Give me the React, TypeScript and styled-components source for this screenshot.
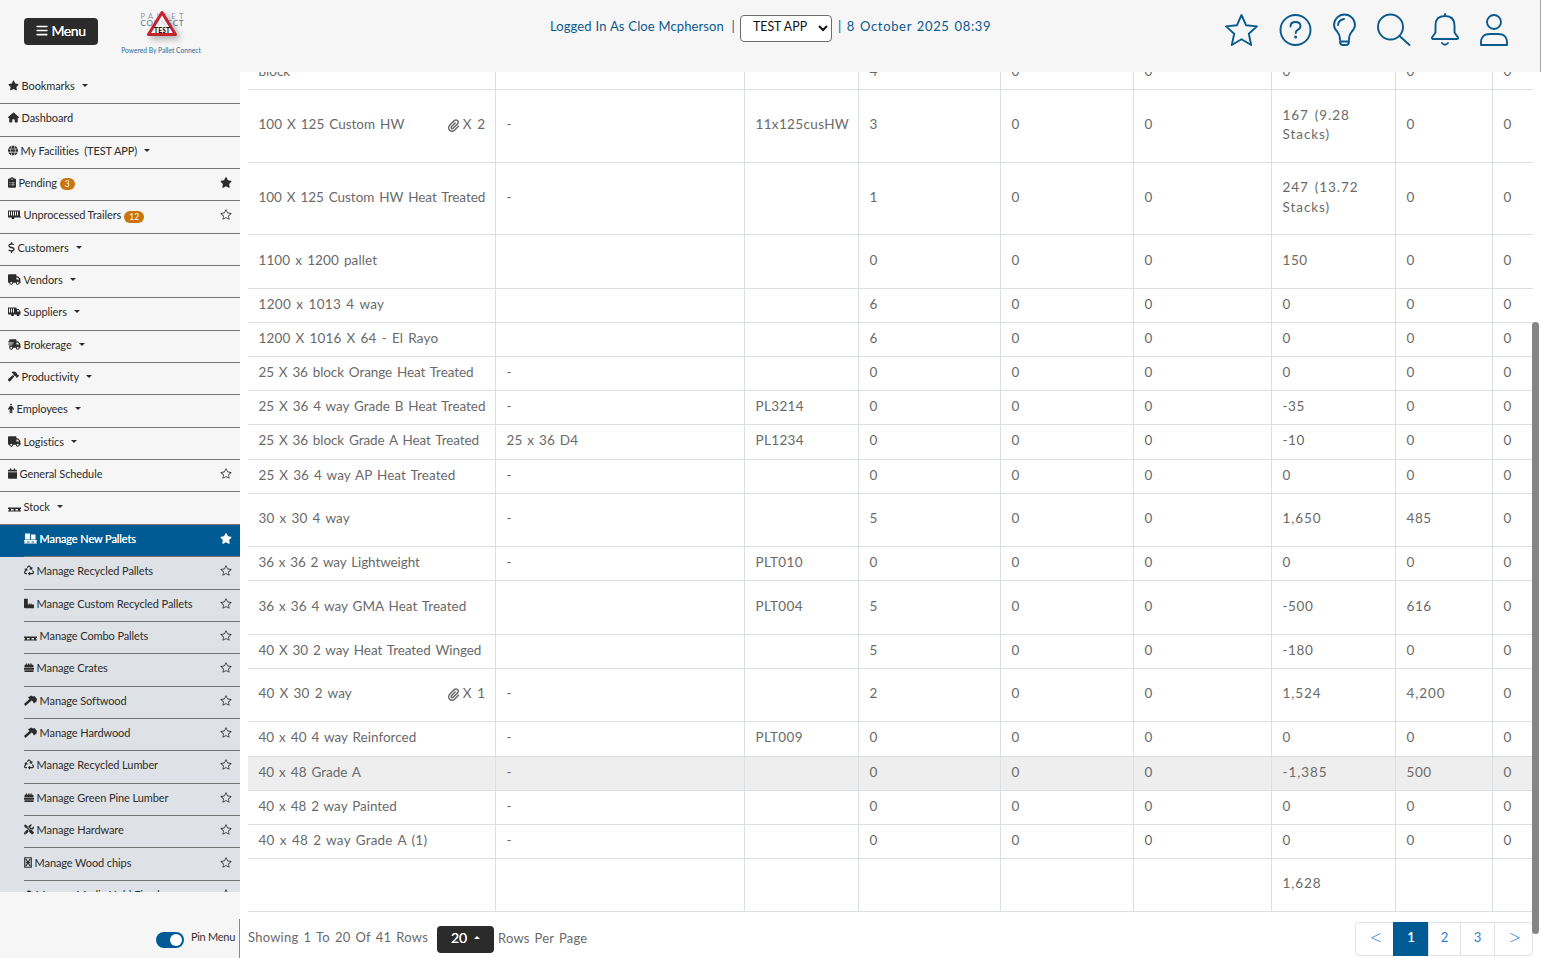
import React from 'react';
import styled, { createGlobalStyle, css } from 'styled-components';
import {
  FaStar, FaHouse, FaGlobe, FaClipboardList, FaDollarSign, FaTruck, FaHammer, FaPerson,
  FaCalendar, FaRecycle, FaScrewdriverWrench, FaPaperclip, FaBars, FaTruckFast,
} from 'react-icons/fa6';
import { BsStar } from 'react-icons/bs';

const GlobalStyle = createGlobalStyle`
  * { box-sizing: border-box; }
  html, body { margin: 0; padding: 0; height: 100%; overflow: hidden; }
  body { font-family: Lato, "Liberation Sans", sans-serif; background: #fff; color: #6a6a6a; }
`;

const Page = styled.div`
  width: 1541px;
  height: 958px;
  display: flex;
  flex-direction: column;
  overflow: hidden;
`;

const Header = styled.header`
  height: 72px;
  flex: none;
  display: flex;
  align-items: flex-start;
  background: #f6f6f6;
  border-right: 1px solid #a5a5a5;
`;

const MenuButton = styled.button`
  width: 74px;
  height: 27px;
  margin: 18px 0 0 24px;
  padding: 0 0 2px;
  border: 0;
  border-radius: 4px;
  background: #2b2b2b;
  color: #fff;
  font: 14px/25px Lato, sans-serif;
  letter-spacing: -0.4px;
  text-shadow: 0 0 0.6px #fff;
  display: flex;
  align-items: center;
  justify-content: center;
  gap: 3px;
  svg { width: 12px; height: 13px; }
`;

const Brand = styled.div`
  width: 100px;
  margin: 8px 0 0 13px;
  display: flex;
  flex-direction: column;
  align-items: center;
  color: #2f6a9b;
  font-size: 6.7px;
  line-height: 8px;
  white-space: nowrap;
  svg { display: block; }
`;

const Session = styled.div`
  flex: 1;
  display: flex;
  align-items: center;
  height: 27px;
  margin: 14px 0 0 339px;
  color: #0b5a8e;
  font-size: 13px;
  line-height: 20px;
  white-space: pre;
`;

const SessionText = styled.span<{ $ls: number; $ws: number }>`
  letter-spacing: ${(p) => p.$ls}px;
  word-spacing: ${(p) => p.$ws}px;
  margin-top: -3px;
`;

const SiteSelect = styled.div`
  width: 92px;
  height: 27px;
  margin: 1px 6px 0 5px;
  padding: 0 3px 2px 12px;
  border: 1px solid #6d6d6d;
  border-radius: 4px;
  background: #fff;
  color: #111;
  font-size: 12.4px;
  display: flex;
  align-items: center;
  justify-content: space-between;
  svg { margin-top: 3px; }
`;

const Tools = styled.div`
  display: flex;
  padding: 12px 31px 0 0;
  svg { display: block; }
`;

const Body = styled.div`
  flex: 1;
  min-height: 0;
  display: flex;
  overflow: hidden;
`;

const Sidebar = styled.aside`
  width: 240px;
  flex: none;
  display: flex;
  flex-direction: column;
  background: #f6f6f6;
`;

const NavList = styled.nav`
  height: 820px;
  overflow: hidden;
`;

const NavTop = styled.div`
  margin-top: -0.21px;
`;

const NavItem = styled.div<{ $sub?: boolean; $active?: boolean }>`
  height: 32.36px;
  padding-left: ${(p) => (p.$sub ? 24 : 0)}px;
  background: ${(p) => (p.$active ? '#005a93' : p.$sub ? '#dee2e6' : 'transparent')};
  color: ${(p) => (p.$active ? '#fff' : '#2c2c2c')};
  ${(p) => p.$active && css`text-shadow: 0 0 0.5px #fff;`}
`;

const NavInner = styled.div<{ $sub?: boolean }>`
  height: 100%;
  display: flex;
  align-items: center;
  border-bottom: 1px solid #757575;
  padding: 0 8px 4.2px ${(p) => (p.$sub ? 0 : 8)}px;
  font-size: 11px;
  white-space: pre;
`;

const NavLabel = styled.span`
  margin-left: 2.6px;
  letter-spacing: -0.1px;
`;

const Caret = styled.i<{ $up?: boolean }>`
  margin-left: 7px;
  border: 3px solid transparent;
  ${(p) => (p.$up ? 'border-bottom-color: currentColor; border-top: 0;' : 'border-top-color: currentColor; border-bottom: 0;')}
`;

const Badge = styled.span`
  margin: 4px 0 0 3px;
  height: 12px;
  padding: 0 5px;
  border-radius: 6px;
  background: #c9740c;
  color: #fff;
  font-size: 8.5px;
  line-height: 12px;
`;

const Bookmark = styled.span`
  margin-left: auto;
  display: flex;
  svg { width: 12px; height: 11px; }
`;

const PinBar = styled.div`
  flex: 1;
  margin-top: 27px;
  border-right: 1px solid #8a8a8a;
  display: flex;
  align-items: flex-start;
  justify-content: flex-end;
  padding: 11px 4px 0 0;
  color: #333;
  font-size: 11px;
  line-height: 14px;
  letter-spacing: -0.28px;
`;

const Toggle = styled.span`
  width: 28px;
  height: 16px;
  margin: 2px 7px 0 0;
  padding: 2px;
  border-radius: 8px;
  background: #005a93;
  display: flex;
  justify-content: flex-end;
`;

const Knob = styled.span`
  width: 12px;
  height: 12px;
  border-radius: 50%;
  background: #fff;
`;

const Main = styled.main`
  flex: 1;
  min-width: 0;
  padding-left: 8px;
  display: flex;
`;

const Content = styled.div`
  width: 1285px;
  flex: none;
  display: flex;
  flex-direction: column;
`;

const ScrollTrack = styled.div`
  width: 8px;
  padding-top: 250px;
`;

const ScrollThumb = styled.div`
  width: 7px;
  height: 612px;
  margin-left: -1px;
  border-radius: 4px;
  background: #858585;
`;

const Row = styled.div<{ $h: number; $hover?: boolean }>`
  height: ${(p) => p.$h}px;
  flex: none;
  display: grid;
  grid-template-rows: 100%;
  grid-template-columns: 248px 249px 114px 142px 133px 138px 124px 97px 40px;
  border-bottom: 1px solid #dcdfe2;
  background: ${(p) => (p.$hover ? '#eeeeee' : '#fff')};
`;

const Cell = styled.div`
  display: flex;
  align-items: center;
  justify-content: space-between;
  padding: 0 9.5px 0 10.5px;
  border-right: 1px solid #dcdfe2;
  font-size: 13.5px;
  line-height: 19.5px;
  &:last-child { border-right: 0; }
`;

const CellText = styled.span<{ $ls?: number }>`
  letter-spacing: ${(p) => p.$ls ?? 0.4}px;
  word-spacing: 1.5px;
  white-space: pre;
  padding-bottom: 1.6px;
`;

const Attachment = styled(CellText)`
  display: flex;
  align-items: center;
  gap: 3px;
  svg { width: 13px; height: 13px; }
`;

const Footer = styled.footer`
  flex: 1;
  display: flex;
  align-items: flex-start;
  padding-top: 10px;
  font-size: 13px;
`;

const FootText = styled.span<{ $ls: number; $lh: number }>`
  line-height: ${(p) => p.$lh}px;
  letter-spacing: ${(p) => p.$ls}px;
  word-spacing: 1.5px;
  white-space: pre;
`;

const SizeButton = styled.button`
  width: 57px;
  height: 27px;
  margin: 4px 4px 0 9px;
  padding: 0 0 5px 0;
  border: 0;
  border-radius: 4px;
  background: #2b2b2b;
  color: #fff;
  font: 14px Lato, sans-serif;
  text-shadow: 0 0 0.6px #fff;
  display: flex;
  align-items: center;
  justify-content: center;
`;

const Pager = styled.div`
  margin-left: auto;
  height: 34px;
  display: flex;
  border: 1px solid #dee2e6;
  border-radius: 4px;
`;

const PageLink = styled.span<{ $w: number; $on?: boolean }>`
  width: ${(p) => p.$w}px;
  display: flex;
  align-items: center;
  justify-content: center;
  padding-bottom: 4px;
  color: ${(p) => (p.$on ? '#fff' : '#2f82d0')};
  border-left: 1px solid ${(p) => (p.$on ? '#005a93' : '#dee2e6')};
  &:first-child { border-left: 0; }
  ${(p) => p.$on && css`background: #005a93; margin: -1px 0; text-shadow: 0 0 0.6px #fff;`}
`;

const PageStep = styled(PageLink)`
  font-family: "Open Sans", sans-serif;
  font-size: 20px;
  font-weight: 300;
  line-height: 20px;
  padding: 0 0 3px 3px;
`;

const Logo = () => (
  <svg width="60" height="38" viewBox="0 0 60 38">
    <defs>
      <filter id="shade" x="-40%" y="-40%" width="200%" height="200%">
        <feDropShadow dx="3" dy="3" stdDeviation="3" floodColor="#000" floodOpacity="0.35" />
      </filter>
    </defs>
    <text x="9.500" y="10.500" fontSize="7.500" fill="#8d98a3" textLength="43" fontFamily="Lato">PALLET</text>
    <text x="9.500" y="18" fontSize="8" fill="#4f7391" textLength="43" fontFamily="Lato">CONNECT</text>
    <path d="M31 4.500 44.500 26.500H17.500Z" fill="#fff" fillOpacity=".75" stroke="#c4202f" strokeWidth="3" strokeLinejoin="round" filter="url(#shade)" />
    <text x="23" y="25" fontSize="6.500" fontWeight="900" fill="#111" textLength="16" fontFamily="Lato">TEST</text>
  </svg>
);

const Wagon = ({ cab }: { cab?: boolean }) => (
  <svg width="13" height="10" viewBox="0 0 26 20" fill="currentColor">
    <path fillRule="evenodd" d={cab
      ? 'M0 2h17v3h4l4 5v6h-2a3 3 0 0 1-6 0h-5a3 3 0 0 1-6 0H1Q0 16 0 14ZM2 4v8h2V4ZM6 4v8h2V4ZM10 4v8h2V4ZM18 7v3h5l-2-3Z'
      : 'M0 2h24v12h2v2H13a3 3 0 0 1-6 0H0ZM2 4v8h2V4ZM6 4v8h2V4ZM10 4v8h2V4ZM14 4v8h2V4ZM18 4v8h2V4Z'} />
    <circle cx={cab ? 9 : 10} cy="17" r="2.200" />
    {cab && <circle cx="20" cy="17" r="2.200" />}
  </svg>
);
const Pallet = () => (
  <svg width="13" height="10" viewBox="0 0 26 20" fill="currentColor">
    <path d="M0 12h26v3h-2v3h2v2H0v-2h2v-3H0Zm6 3v3h5v-3Zm9 0v3h5v-3Z" fillRule="evenodd" />
  </svg>
);
const PalletLoad = () => (
  <svg width="13" height="11" viewBox="0 0 26 22" fill="currentColor">
    <path d="M2 1h10v12H2ZM14 3h9v10h-9ZM0 14h26v3h-2v2h2v2H0v-2h2v-2H0Zm6 3v2h5v-2Zm9 0v2h5v-2Z" fillRule="evenodd" />
  </svg>
);
const Ruler = () => (
  <svg width="10" height="11" viewBox="0 0 21 22" fill="currentColor">
    <path d="M0 1h8v12h2v-2h2v2h2v-2h2v2h5v8H2q-2 0-2-2Z" />
  </svg>
);
const Crate = () => (
  <svg width="10" height="11" viewBox="0 0 22 22" fill="currentColor">
    <path d="M4 2h3v3h2V2h3v3h2V2h3v3h2q2 0 2 2v4H1V7q0-2 2-2h1ZM0 12h22v4H0ZM1 17h20v4H1Z" />
  </svg>
);
const Axe = () => (
  <svg width="13" height="11" viewBox="0 0 26 22" fill="currentColor">
    <path d="M0 18 11 8 8 5l6-4 4 2 3-1 5 6-1 5-5 4-3-5-2-1L3 22Z" />
  </svg>
);
const Hourglass = () => (
  <svg width="8" height="11" viewBox="0 0 16 22" fill="none" stroke="currentColor" strokeWidth="2.400">
    <path d="M1.500 1.500h13v19h-13ZM4 4l8 14M12 4 4 18M4 11h8" />
  </svg>
);

const NavGlyph = styled.span<{ $w: number }>`
  width: ${(p) => p.$w}px;
  flex: none;
  display: flex;
  svg { width: 100%; height: 11px; }
`;

type Nav = { icon: React.ReactNode; w: number; label: string; caret?: boolean; badge?: string; star?: 'on' | 'off'; sub?: boolean; active?: boolean };
const NAV: Nav[] = [
  { icon: <FaStar />, w: 11, label: 'Bookmarks', caret: true },
  { icon: <FaHouse />, w: 11, label: 'Dashboard' },
  { icon: <FaGlobe />, w: 10, label: 'My Facilities  (TEST APP)', caret: true },
  { icon: <FaClipboardList />, w: 8, label: 'Pending', badge: '3', star: 'on' },
  { icon: <Wagon />, w: 13, label: 'Unprocessed Trailers', badge: '12', star: 'off' },
  { icon: <FaDollarSign />, w: 7, label: 'Customers', caret: true },
  { icon: <FaTruck />, w: 13, label: 'Vendors', caret: true },
  { icon: <Wagon cab />, w: 13, label: 'Suppliers', caret: true },
  { icon: <FaTruckFast />, w: 13, label: 'Brokerage', caret: true },
  { icon: <FaHammer />, w: 11, label: 'Productivity', caret: true },
  { icon: <FaPerson />, w: 6, label: 'Employees', caret: true },
  { icon: <FaTruck />, w: 13, label: 'Logistics', caret: true },
  { icon: <FaCalendar />, w: 9, label: 'General Schedule', star: 'off' },
  { icon: <Pallet />, w: 13, label: 'Stock', caret: true },
  { icon: <PalletLoad />, w: 13, label: 'Manage New Pallets', star: 'on', sub: true, active: true },
  { icon: <FaRecycle />, w: 10, label: 'Manage Recycled Pallets', star: 'off', sub: true },
  { icon: <Ruler />, w: 10, label: 'Manage Custom Recycled Pallets', star: 'off', sub: true },
  { icon: <Pallet />, w: 13, label: 'Manage Combo Pallets', star: 'off', sub: true },
  { icon: <Crate />, w: 10, label: 'Manage Crates', star: 'off', sub: true },
  { icon: <Axe />, w: 13, label: 'Manage Softwood', star: 'off', sub: true },
  { icon: <Axe />, w: 13, label: 'Manage Hardwood', star: 'off', sub: true },
  { icon: <FaRecycle />, w: 10, label: 'Manage Recycled Lumber', star: 'off', sub: true },
  { icon: <Crate />, w: 10, label: 'Manage Green Pine Lumber', star: 'off', sub: true },
  { icon: <FaScrewdriverWrench />, w: 10, label: 'Manage Hardware', star: 'off', sub: true },
  { icon: <Hourglass />, w: 8, label: 'Manage Wood chips', star: 'off', sub: true },
  { icon: <FaHammer />, w: 9, label: 'Manage Media Hold Fixed', star: 'off', sub: true },
];

type Item = { h: number; name: string; ls?: number; clips?: number; cells: string[]; hover?: boolean };
const ROWS: Item[] = [
  { h: 73, name: '100 X 125 Custom HW', ls: 0.01, clips: 2, cells: ['-', '11x125cusHW', '3', '0', '0', '167 (9.28\nStacks)', '0', '0'] },
  { h: 72, name: '100 X 125 Custom HW Heat Treated', ls: -0.04, cells: ['-', '', '1', '0', '0', '247 (13.72\nStacks)', '0', '0'] },
  { h: 54, name: '1100 x 1200 pallet', ls: 0.1, cells: ['', '', '0', '0', '0', '150', '0', '0'] },
  { h: 34, name: '1200 x 1013 4 way', ls: 0.3, cells: ['', '', '6', '0', '0', '0', '0', '0'] },
  { h: 34, name: '1200 X 1016 X 64 - El Rayo', ls: 0.15, cells: ['', '', '6', '0', '0', '0', '0', '0'] },
  { h: 34, name: '25 X 36 block Orange Heat Treated', ls: -0.09, cells: ['-', '', '0', '0', '0', '0', '0', '0'] },
  { h: 34, name: '25 X 36 4 way Grade B Heat Treated', ls: -0.04, cells: ['-', 'PL3214', '0', '0', '0', '-35', '0', '0'] },
  { h: 35, name: '25 X 36 block Grade A Heat Treated', ls: -0.08, cells: ['25 x 36 D4', 'PL1234', '0', '0', '0', '-10', '0', '0'] },
  { h: 34, name: '25 X 36 4 way AP Heat Treated', ls: 0.06, cells: ['-', '', '0', '0', '0', '0', '0', '0'] },
  { h: 53, name: '30 x 30 4 way', ls: 0.15, cells: ['-', '', '5', '0', '0', '1,650', '485', '0'] },
  { h: 34, name: '36 x 36 2 way Lightweight', ls: -0.1, cells: ['-', 'PLT010', '0', '0', '0', '0', '0', '0'] },
  { h: 54, name: '36 x 36 4 way GMA Heat Treated', ls: 0, cells: ['', 'PLT004', '5', '0', '0', '-500', '616', '0'] },
  { h: 34, name: '40 X 30 2 way Heat Treated Winged', ls: -0.06, cells: ['', '', '5', '0', '0', '-180', '0', '0'] },
  { h: 53, name: '40 X 30 2 way', ls: 0.15, clips: 1, cells: ['-', '', '2', '0', '0', '1,524', '4,200', '0'] },
  { h: 35, name: '40 x 40 4 way Reinforced', ls: 0, cells: ['-', 'PLT009', '0', '0', '0', '0', '0', '0'] },
  { h: 34, name: '40 x 48 Grade A', ls: 0, cells: ['-', '', '0', '0', '0', '-1,385', '500', '0'], hover: true },
  { h: 34, name: '40 x 48 2 way Painted', ls: -0.03, cells: ['-', '', '0', '0', '0', '0', '0', '0'] },
  { h: 34, name: '40 x 48 2 way Grade A (1)', ls: 0.22, cells: ['-', '', '0', '0', '0', '0', '0', '0'] },
  { h: 53, name: '', cells: ['', '', '', '', '', '1,628', '', ''] },
];

// Quantities with separators or stack counts are tracked wider than codes.
const tracking = (value: string, column: number) => {
  if (column === 0) return 0.05;
  if (column === 1) return 0.35;
  return /[,(]/.test(value) ? 0.95 : 0.6;
};

const FirstRow = styled(Row)`
  ${Cell} { align-items: flex-end; }
  ${CellText} { padding-bottom: 8px; }
`;

export default function App() {
  return (
    <Page>
      <GlobalStyle />
      <Header>
        <MenuButton><FaBars />Menu</MenuButton>
        <Brand><Logo />Powered By Pallet Connect</Brand>
        <Session>
          <SessionText $ls={0.1} $ws={0.4}>Logged In As Cloe Mcpherson  |</SessionText>
          <SiteSelect>
            TEST APP
            <svg width="10" height="7" viewBox="0 0 10 7" fill="none" stroke="#111" strokeWidth="2"><path d="M1 1l4 4 4-4" /></svg>
          </SiteSelect>
          <SessionText $ls={0.66} $ws={1}>| 8 October 2025 08:39</SessionText>
        </Session>
        <Tools>
          <svg width="284" height="36" viewBox="0 0 284 36" fill="none" stroke="#0b5a8e" strokeWidth="1.900" strokeLinejoin="round" strokeLinecap="round">
            <path d="M16.500 3 21 13.200 32 14.400 23.800 21.800 26.200 33 16.500 27.300 6.800 33 9.200 21.800 1 14.400 12 13.200Z" />
            <circle cx="70.500" cy="18" r="15" />
            <path d="M65.500 14.500q0-4.500 5-4.500t5 4q0 2.500-2.500 3.700-2.300 1.200-2.300 3.300" />
            <circle cx="70.600" cy="25" r=".6" fill="#0b5a8e" />
            <path d="M115 28q0-5-2.500-8-3.500-3.500-3.500-7a10.500 10.500 0 0 1 21 0q0 3.500-3.500 7-2.500 3-2.500 8M115 29.500h9q0 3.500-3 3.500h-3q-3 0-3-3.500ZM113 13q.5-5 6-6" />
            <circle cx="165.500" cy="15" r="12.500" /><path d="m174.500 24 10 9" />
            <path d="M220 2v2M209 27q-2.500 0-2-1.500l3.500-5v-7q0-9.500 9.500-9.500t9.500 9.500v7l3.500 5q.5 1.500-2 1.500ZM217 31q3 3.500 6 0" />
            <circle cx="269" cy="10" r="7" /><path d="M256 33q-1-11 9-11h8q10 0 9 11Z" />
          </svg>
        </Tools>
      </Header>
      <Body>
        <Sidebar>
          <NavList>
            <NavTop>
              {NAV.map((n) => (
                <NavItem key={n.label} $sub={n.sub} $active={n.active}>
                  <NavInner $sub={n.sub}>
                    <NavGlyph $w={n.w}>{n.icon}</NavGlyph>
                    <NavLabel>{n.label}</NavLabel>
                    {n.caret && <Caret />}
                    {n.badge && <Badge>{n.badge}</Badge>}
                    {n.star && <Bookmark>{n.star === 'on' ? <FaStar /> : <BsStar />}</Bookmark>}
                  </NavInner>
                </NavItem>
              ))}
            </NavTop>
          </NavList>
          <PinBar><Toggle><Knob /></Toggle>Pin Menu</PinBar>
        </Sidebar>
        <Main>
          <Content>
            <FirstRow $h={18}>
              {['block', '', '', '4', '0', '0', '0', '0', '0'].map((c, i) => <Cell key={i}><CellText $ls={0}>{c}</CellText></Cell>)}
            </FirstRow>
            {ROWS.map((r, k) => (
              <Row key={k} $h={r.h} $hover={r.hover}>
                <Cell>
                  <CellText $ls={r.ls}>{r.name}</CellText>
                  {r.clips && <Attachment><FaPaperclip />X {r.clips}</Attachment>}
                </Cell>
                {r.cells.map((c, i) => <Cell key={i}><CellText $ls={tracking(c, i)}>{c}</CellText></Cell>)}
              </Row>
            ))}
            <Footer>
              <FootText $ls={0.23} $lh={31}>Showing 1 To 20 Of 41 Rows</FootText>
              <SizeButton>20<Caret $up /></SizeButton>
              <FootText $ls={0.2} $lh={32}>Rows Per Page</FootText>
              <Pager>
                <PageStep $w={37}>&lt;</PageStep>
                <PageLink $w={35} $on>1</PageLink>
                <PageLink $w={32}>2</PageLink>
                <PageLink $w={34}>3</PageLink>
                <PageStep $w={38}>&gt;</PageStep>
              </Pager>
            </Footer>
          </Content>
          <ScrollTrack><ScrollThumb /></ScrollTrack>
        </Main>
      </Body>
    </Page>
  );
}
